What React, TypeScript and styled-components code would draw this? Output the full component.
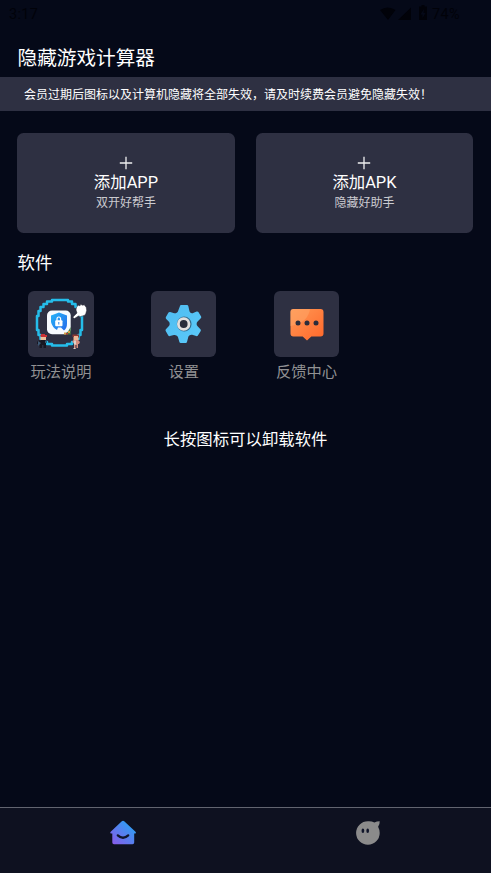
import React from "react";
import styled, { createGlobalStyle } from "styled-components";

const GlobalStyle = createGlobalStyle`
  * { box-sizing: border-box; }
  body {
    margin: 0;
    background: #050918;
    font-family: Roboto, "Noto Sans CJK SC", sans-serif;
  }
`;

const Screen = styled.div`
  display: flex;
  flex-direction: column;
  height: 100vh;
  overflow: hidden;
  background: #050918;
  color: #fff;
`;

const StatusBar = styled.header`
  display: flex;
  align-items: center;
  justify-content: space-between;
  flex: none;
  height: 28px;
  padding: 0 31px 0 9px;
  color: #010209;
  font-size: 14.5px;
  letter-spacing: 0.35px;
`;

const StatusIcons = styled.div`
  display: flex;
  align-items: center;
  svg { display: block; }
`;

const Title = styled.h1`
  flex: none;
  margin: 0;
  padding-left: 17.5px;
  height: 49px;
  font-size: 19.65px;
  font-weight: 400;
  line-height: 61px;
`;

const Notice = styled.div`
  flex: none;
  height: 34px;
  padding-left: 24px;
  background: #2e3042;
  font-size: 12px;
  line-height: 37px;
  white-space: nowrap;
`;

const Actions = styled.section`
  display: grid;
  grid-template-columns: 1fr 1fr;
  gap: 21px;
  flex: none;
  padding: 22px 17.8px 0 17.2px;
`;

const ActionCard = styled.button`
  display: flex;
  flex-direction: column;
  align-items: center;
  height: 100px;
  padding: 23px 0 0;
  border: 0;
  border-radius: 6.5px;
  background: #2e3042;
  color: #fff;
  font-family: inherit;
  svg { display: block; }
`;

const ActionTitle = styled.span`
  margin-top: 3px;
  font-size: 16.4px;
  line-height: 20px;
`;

const ActionSub = styled.span`
  color: #cbcbd0;
  font-size: 12px;
  line-height: 20px;
`;

const SectionTitle = styled.h2`
  flex: none;
  margin: 0;
  padding: 17px 0 0 17.5px;
  height: 58px;
  font-size: 17.5px;
  font-weight: 400;
  line-height: 26px;
`;

const AppGrid = styled.section`
  display: grid;
  grid-template-columns: repeat(4, 122.75px);
  flex: none;
  margin-left: -0.4px;
`;

const AppItem = styled.div`
  display: flex;
  flex-direction: column;
  align-items: center;
`;

const Tile = styled.div`
  width: 65.5px;
  height: 66px;
  border-radius: 6px;
  background: #2e3042;
  svg { display: block; width: 66px; height: 66px; }
`;

const AppLabel = styled.span`
  color: #919193;
  font-size: 15.3px;
  line-height: 30px;
`;

const Hint = styled.p`
  flex: none;
  margin: 38px 0 0;
  font-size: 16.4px;
  line-height: 30px;
  text-align: center;
`;

const BottomNav = styled.nav`
  display: grid;
  grid-template-columns: 1fr 1fr;
  height: 66px;
  margin-top: auto;
  border-top: 1px solid #62646f;
  background: #0e1120;
`;

const NavItem = styled.div`
  display: flex;
  justify-content: center;
  padding-top: 11px;
  svg { display: block; }
`;

const PlusIcon = () => (
  <svg width="14" height="14" viewBox="0 0 14 14">
    <path d="M7 0.800v12.400M0.800 7h12.400" stroke="#eeeef0" strokeWidth="1.3" />
  </svg>
);

const GuideIcon = () => (
  <svg viewBox="0 0 66 66">
    <defs>
      <linearGradient id="shield" x1="0" y1="0" x2="1" y2="1">
        <stop offset="0" stopColor="#26b5f8" />
        <stop offset="1" stopColor="#2569ea" />
      </linearGradient>
    </defs>
    <path
      d="M24 9H40V10.500H44V13H47.500V16H50.500V20H52.500V25H54V39H52.500V44H50.500V48H47.500V51H44V53H39V54.500H24V53H19V51H15.500V48H12.500V44H10.500V39H9V25H10.500V20H12.500V16H15.500V13H19V10.500H24Z"
      fill="none" stroke="#25bdea" strokeWidth="2.500" strokeLinejoin="round"
    />
    <rect x="19" y="19.500" width="23.700" height="23.700" rx="5" fill="#f7fbff" />
    <path d="M31 21.500l8 3v8q0 5-3 7l-3-3h-3l-1 2.500q-5-3-6-8v-6.500z" fill="url(#shield)" />
    <path d="M29 30v-2q0-2 1.800-2t1.800 2v2" fill="none" stroke="#fff" strokeWidth="1.200" />
    <rect x="27.200" y="29.300" width="7.300" height="6" rx="1" fill="#fff" />
    <path d="M30.800 31v2.500" stroke="#3186e9" strokeWidth="1" />
    <path d="M42.700 36v7.500H35.500l4.500-3z" fill="#477f46" />
    <path d="M36 41.500h2v2h-2zM40 40h2v2h-2z" fill="#d9a14c" />
    <path d="M38 42h2v1.500h-2z" fill="#bd3c36" />
    <path
      d="M44.700 26.300l4.300-4.300-1-3 .5-3 2-1.700 1.500.5.700-1.500 2 1 1.500-.5 2 2.500.5 3-1 3.700-1.500 1.500-3.700 1-2-.5-4 2.500z"
      fill="#fff" stroke="#22232e" strokeWidth=".5"
    />
    <path d="M12 44h1v-1h4v1h2v2h-6z" fill="#c93235" />
    <path d="M12.500 46h5.500v3h-2v1h-3.500z" fill="#eac09b" />
    <path d="M10 50l3-1h4l2 2-1 1v5h-2.500v-3h-1.500v3h-2.500v-4H9v-2z" fill="#181822" />
    <path d="M10 50l3 2-3 3zM17 50h1v2h-1z" fill="#3c5975" />
    <path d="M45.500 44h5v5h-5z" fill="#f0b695" />
    <path d="M44.500 43.500h6.500v3h-1v-1.500h-4v1h-1.500z" fill="#8d3934" />
    <path d="M45.500 49h4.500l2 2-1 2h-1v4h-1.500v-3h-1v4h-1.500v-6l-2-1z" fill="#d68f80" />
    <path d="M46 49.500h2v4h-2zM45.500 57h2v1h-2z" fill="#dcd1ca" />
  </svg>
);

const GearIcon = () => (
  <svg viewBox="0 0 66 66">
    <defs>
      <linearGradient id="gear" x1="0" y1="0" x2="1" y2="1">
        <stop offset="0" stopColor="#4fbcf0" />
        <stop offset="1" stopColor="#5bcafa" />
      </linearGradient>
    </defs>
    <path
      d="M30 14h6q1 0 1.3 1l1.2 5.2q.4 1.4 1.7 1.9 1.3.6 2.5-.3l3-1.3q1-.4 1.7.5l2.7 4.5q.5 1-.3 1.8l-3.2 3.2q-1 1-1 2.4t1 2.4l2.8 3q.8.8.3 1.7l-2.8 4.6q-.6.8-1.7.5l-4-1.3q-1.3-.4-2.5.4-1.2.7-1.500 2.100L36 51q-.3 1-1.300 1h-5q-1 0-1.300-1l-1.300-4.500q-.4-1.500-1.700-2-1.200-.8-2.500-.4l-4 1q-1 .3-1.600-.6L14.700 40q-.5-1 .2-1.700l2.800-3q1-1 1-2.400t-1-2.400l-2.500-2.600q-.8-.8-.3-1.800l2.600-4.500q.6-.9 1.700-.6l4 1.200q1.300.4 2.500-.4 1.200-.7 1.500-2.100L29 15q.2-1 1-1z"
      fill="url(#gear)"
    />
    <circle cx="33.200" cy="33" r="7.400" fill="#346c8e" />
    <circle cx="32.700" cy="33" r="5.300" fill="#292d3b" stroke="#e1dfde" strokeWidth="2.800" />
  </svg>
);

const FeedbackIcon = () => (
  <svg viewBox="0 0 66 66">
    <defs>
      <linearGradient id="bubble" x1="0" y1="0" x2="1" y2="1">
        <stop offset="0" stopColor="#ff9955" />
        <stop offset="1" stopColor="#ff672a" />
      </linearGradient>
    </defs>
    <path d="M19.500 18h27q3 0 3 3v21.500q0 3-3 3h-9.200L33 49.500l-4.300-4h-9.200q-3 0-3-3V21q0-3 3-3z" fill="url(#bubble)" />
    <path d="M19.500 18H36q-2 14-19.500 17V21q0-3 3-3z" fill="#ffa568" opacity=".55" />
    <g fill="#2d2d3b">
      <circle cx="24" cy="32" r="2.500" />
      <circle cx="33" cy="32" r="2.500" />
      <circle cx="42" cy="32" r="2.500" />
    </g>
  </svg>
);

const HomeIcon = () => (
  <svg width="28" height="28" viewBox="0 0 28 28">
    <defs>
      <linearGradient id="home" x1="1" y1="0" x2="0" y2="1">
        <stop offset=".2" stopColor="#319bf2" />
        <stop offset=".95" stopColor="#895bea" />
      </linearGradient>
    </defs>
    <path d="M12.800 2.300q1.200-1 2.400 0L26.500 12.700q1 1.200 0 1.700H25.200v9.100q0 1.700-1.700 1.700h-18.500q-1.700 0-1.700-1.700v-9.100H1.700q-1-.5 0-1.700z" fill="url(#home)" />
    <path d="M8.800 16.400q5.200 4.800 10.400 0" fill="none" stroke="#10162d" strokeWidth="2.300" strokeLinecap="round" />
  </svg>
);

const ProfileIcon = () => (
  <svg width="28" height="28" viewBox="0 0 28 28">
    <path d="M13.900 2.200q3.700-.2 6.500 1.200 2.500-1.200 5.300-1.200.2 3.200-1.600 5.600 1.600 2.900 1.600 6.200A11.800 11.800 0 1 1 13.900 2.200z" fill="#8b8b8b" />
    <ellipse cx="8.900" cy="11.800" rx="1.350" ry="2.200" fill="#10152a" />
    <ellipse cx="13.700" cy="11.800" rx="1.350" ry="2.200" fill="#10152a" />
  </svg>
);

const SignalIcons = () => (
  <svg width="52" height="20" viewBox="0 0 52 20" fill="currentColor">
    <path d="M0 6q7.500-5 15.500 0L8 16zM31 3.500V16H18z" />
    <path fillRule="evenodd" d="M39 2.500h2.500V1h3v1.500H47V16h-8zM44 5l-3.500 5.500h2V14l3-5h-2z" />
  </svg>
);

const actions = [
  { title: "添加APP", sub: "双开好帮手" },
  { title: "添加APK", sub: "隐藏好助手" },
];

const apps = [
  { label: "玩法说明", Icon: GuideIcon },
  { label: "设置", Icon: GearIcon },
  { label: "反馈中心", Icon: FeedbackIcon },
];

export default function App() {
  return (
    <Screen>
      <GlobalStyle />
      <StatusBar>
        <span>3:17</span>
        <StatusIcons>
          <SignalIcons />
          <span>74%</span>
        </StatusIcons>
      </StatusBar>
      <Title>隐藏游戏计算器</Title>
      <Notice>会员过期后图标以及计算机隐藏将全部失效，请及时续费会员避免隐藏失效！</Notice>
      <Actions>
        {actions.map(({ title, sub }) => (
          <ActionCard key={title}>
            <PlusIcon />
            <ActionTitle>{title}</ActionTitle>
            <ActionSub>{sub}</ActionSub>
          </ActionCard>
        ))}
      </Actions>
      <SectionTitle>软件</SectionTitle>
      <AppGrid>
        {apps.map(({ label, Icon }) => (
          <AppItem key={label}>
            <Tile><Icon /></Tile>
            <AppLabel>{label}</AppLabel>
          </AppItem>
        ))}
      </AppGrid>
      <Hint>长按图标可以卸载软件</Hint>
      <BottomNav>
        <NavItem><HomeIcon /></NavItem>
        <NavItem><ProfileIcon /></NavItem>
      </BottomNav>
    </Screen>
  );
}
